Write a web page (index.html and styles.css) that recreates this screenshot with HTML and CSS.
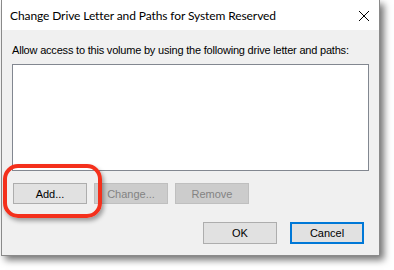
FILE: index.html
```html
<!DOCTYPE html>
<html lang="en">
<head>
    <meta charset="UTF-8">
    <meta name="viewport" content="width=device-width, initial-scale=1.0">
    <title>Change Drive Letter and Paths</title>
    <link rel="stylesheet" href="styles.css">
</head>
<body>
    <div class="page">
        <div class="window">
            <div class="title-bar">
                <span class="title">Change Drive Letter and Paths for System Reserved</span>
                <svg class="close" width="12" height="12" viewBox="0 0 12 12">
                    <path d="M1 1 L11 11 M11 1 L1 11" stroke="#000" stroke-width="1" fill="none"/>
                </svg>
            </div>
            <div class="content">
                <div class="label">Allow access to this volume by using the following drive letter and paths:</div>
                <div class="list-box"></div>
                <div class="edit-buttons">
                    <button type="button">Add...</button>
                    <button type="button" disabled>Change...</button>
                    <button type="button" disabled>Remove</button>
                </div>
                <div class="dialog-buttons">
                    <button type="button">OK</button>
                    <button type="button" class="default">Cancel</button>
                </div>
            </div>
        </div>
        <div class="callout"></div>
    </div>
</body>
</html>
```

FILE: styles.css
```css
body {
    margin: 0;
    background-color: #ffffff;
    font-family: "Liberation Sans", Arial, sans-serif;
    font-size: 11px;
    color: #000000;
}

.page {
    position: relative;
    width: 394px;
    height: 270px;
}

.window {
    margin-left: 1px;
    width: 377px;
    height: 255px;
    border: 1px solid #8a8a8a;
    border-top: 0;
    background-color: #f0f0f0;
    box-shadow: 4px 4px 7px rgba(0, 0, 0, 0.55);
}

.title-bar {
    height: 30px;
    background-color: #ffffff;
    display: flex;
    align-items: center;
    justify-content: space-between;
    padding: 0 9px 0 8px;
}

.title {
    font-family: Lato, "Noto Sans", sans-serif;
    font-size: 12px;
    letter-spacing: -0.1px;
    white-space: nowrap;
}

.close {
    display: block;
    margin-top: 1px;
}

.content {
    padding: 12px 15px 0 10px;
}

.label {
    height: 16px;
    line-height: 16px;
    letter-spacing: -0.2px;
    white-space: nowrap;
}

.list-box {
    margin-top: 6px;
    width: 355px;
    height: 105px;
    background-color: #ffffff;
    border: 1px solid #828790;
}

.edit-buttons {
    margin-top: 12px;
    margin-left: 1px;
    display: flex;
    gap: 7px;
}

.edit-buttons button {
    height: 21px;
}

.dialog-buttons {
    margin-top: 18px;
    display: flex;
    justify-content: flex-end;
    gap: 13px;
}

.dialog-buttons button {
    height: 22px;
}

button {
    width: 74px;
    padding: 0;
    background-color: #e1e1e1;
    border: 1px solid #adadad;
    border-radius: 0;
    font-family: "Liberation Sans", Arial, sans-serif;
    font-size: 11px;
    color: #000000;
}

button:disabled {
    background-color: #cccccc;
    border-color: #bfbfbf;
    color: #838383;
}

button.default {
    border: 2px solid #0078d7;
}

.callout {
    position: absolute;
    left: 3px;
    top: 164px;
    width: 91px;
    height: 46px;
    border: 4px solid #f4301c;
    border-radius: 15px;
    box-shadow: 2px 3px 4px rgba(0, 0, 0, 0.35);
}
```
